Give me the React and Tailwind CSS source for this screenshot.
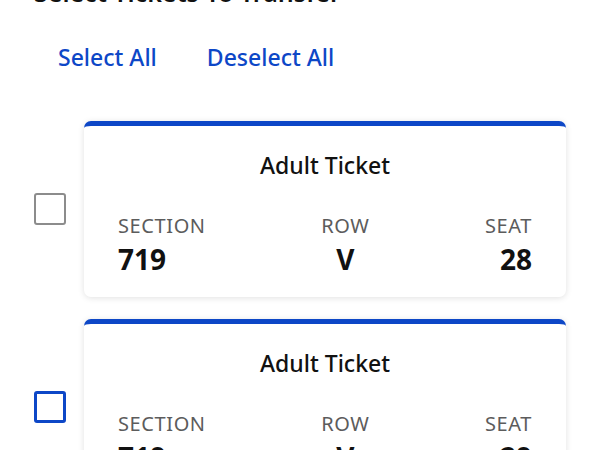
const tickets = [
    { id: 1, section: "719", row: "V", seat: "28", selected: false },
    { id: 2, section: "719", row: "V", seat: "29", selected: true },
];

const TicketCard = ({ ticket }) => {
    return (
        <div className="flex items-center gap-[18px]">
            <div
                className={`w-[32px] h-[32px] shrink-0 rounded-[3px] bg-white ${ticket.selected ? 'border-[3px] border-[#0d47c7]' : 'border-2 border-[#8c8c8c]'}`}
            />
            <div className="flex-1 bg-white rounded-[7px] border-t-[5px] border-[#0d47c7] shadow-[0_1px_6px_rgba(0,0,0,0.12)] px-[34px] pt-[25px] pb-[21px]">
                <h3 className="text-center text-[23px] leading-[28px] font-medium text-[#111]">Adult Ticket</h3>
                <div className="flex justify-between mt-[35px]">
                    <div className="flex flex-col items-start">
                        <span className="text-[20px] leading-[24px] tracking-[0.6px] text-[#5c5c5c]">SECTION</span>
                        <span className="text-[28px] leading-[34px] font-bold text-[#111] mt-[4px]">{ticket.section}</span>
                    </div>
                    <div className="flex flex-col items-center">
                        <span className="text-[20px] leading-[24px] tracking-[0.6px] text-[#5c5c5c]">ROW</span>
                        <span className="text-[28px] leading-[34px] font-bold text-[#111] mt-[4px]">{ticket.row}</span>
                    </div>
                    <div className="flex flex-col items-end">
                        <span className="text-[20px] leading-[24px] tracking-[0.6px] text-[#5c5c5c]">SEAT</span>
                        <span className="text-[28px] leading-[34px] font-bold text-[#111] mt-[4px]">{ticket.seat}</span>
                    </div>
                </div>
            </div>
        </div>
    )
}

export default function App() {
    return (
        <div className="h-[450px] overflow-hidden bg-white font-['Noto_Sans','Lato',sans-serif] pl-[34px] pr-[34px]">
            <h2 className="-mt-[21px] text-[25px] leading-[26px] font-semibold text-[#111]">Select Tickets To Transfer</h2>
            <div className="flex gap-[50px] pl-[24px] mt-[38px]">
                <button className="text-[23px] leading-[28px] font-medium text-[#0d47c7]">Select All</button>
                <button className="text-[23px] leading-[28px] font-medium text-[#0d47c7]">Deselect All</button>
            </div>
            <div className="flex flex-col gap-[22px] mt-[50px]">
                {tickets.map(t => (
                    <TicketCard key={t.id} ticket={t} />
                ))}
            </div>
        </div>
    )
}
